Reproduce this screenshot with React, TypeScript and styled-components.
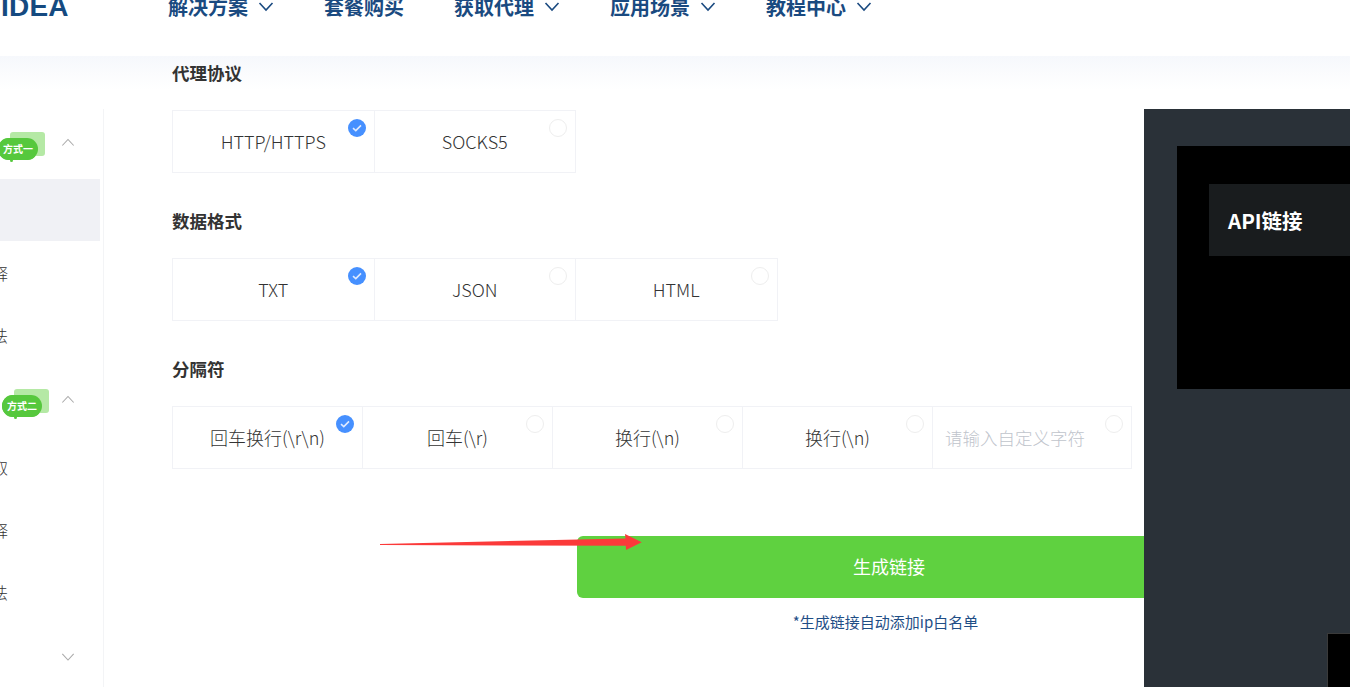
import React from "react";
import styled, { createGlobalStyle } from "styled-components";

const FONT = `"Noto Sans", "Noto Sans CJK SC", sans-serif`;

const Global = createGlobalStyle`
  html, body { margin: 0; padding: 0; height: 687px; overflow: hidden; background: #fff; }
  body { font-family: ${FONT}; color: #333; }
  * { box-sizing: border-box; }
`;

const Page = styled.div`
  position: relative;
  width: 1350px;
  height: 687px;
  overflow: hidden;
`;

const Header = styled.header`
  display: flow-root;
  height: 56px;
  background: #fff;
`;

const HeaderRow = styled.div`
  display: flex;
  align-items: center;
  height: 28px;
  margin-top: -7px;
`;

const Logo = styled.div`
  width: 168px;
  padding-left: 1px;
  font: 700 28px/28px "Liberation Sans", sans-serif;
  color: #154a80;
  letter-spacing: 0.2px;
`;

const Nav = styled.nav`
  display: flex;
  align-items: center;
  gap: 50px;
`;

const NavItem = styled.a`
  display: flex;
  align-items: center;
  gap: 10px;
  font-size: 20px;
  line-height: 28px;
  font-weight: 700;
  font-family: "Noto Sans CJK SC", sans-serif;
  color: #1a4a80;
`;

const Content = styled.div`
  display: flex;
  height: 631px;
  background: linear-gradient(#f6f8fc, #ffffff 34px) no-repeat;
`;

const Sidebar = styled.aside`
  flex: none;
  width: 104px;
  margin-top: 53px;
  padding-right: 3px;
  border-right: 1px solid #f3f4f6;
  overflow: hidden;
  background: #fff;
`;

const GroupHead = styled.div`
  display: grid;
  grid-template-columns: 61px 14px;
  align-items: center;
  height: 67px;
  margin-bottom: 3px;
`;

const Badge = styled.div<{ $offset: number }>`
  position: relative;
  width: 40px;
  height: 22px;
  margin-left: ${(p) => p.$offset}px;
  margin-top: 12px;
  border-radius: 11px;
  background: #56c83d;
  box-shadow: 0 0 0 1.5px #fff;
  color: #fff;
  font-size: 10px;
  font-weight: 700;
  line-height: 22px;
  text-align: center;
  font-family: "Noto Sans CJK SC", sans-serif;
  z-index: 0;

  &::before {
    content: "";
    position: absolute;
    left: 12px;
    top: -6px;
    width: 35px;
    height: 24px;
    border-radius: 3px;
    background: #b5e9a5;
    z-index: -2;
  }

  &::after {
    content: "";
    position: absolute;
    left: 12px;
    bottom: -2px;
    width: 3px;
    height: 3px;
    border-radius: 50%;
    background: #56c83d;
  }
`;

const BadgeFace = styled.span`
  position: relative;
  display: block;
  border-radius: 11px;
  background: #56c83d;
`;

const SideRow = styled.div<{ $active?: boolean }>`
  display: flex;
  align-items: center;
  justify-content: flex-end;
  height: 62.4px;
  width: 100px;
  padding-right: 92px;
  font-size: 16px;
  font-weight: 300;
  white-space: nowrap;
  font-family: "Noto Sans CJK SC", sans-serif;
  color: #333;
  background: ${(p) => (p.$active ? "#f0f1f5" : "transparent")};
`;

const Main = styled.main`
  flex: 1;
  min-width: 0;
  padding-left: 68px;
  padding-top: 3px;
`;

const Section = styled.section`
  margin-bottom: 34px;
`;

const Heading = styled.h3`
  margin: 0 0 24px;
  font-size: 17.5px;
  line-height: 27px;
  font-weight: 700;
  font-family: "Noto Sans CJK SC", sans-serif;
  color: #333;
`;

const Options = styled.div`
  display: flex;
`;

const Option = styled.div<{ $w: number }>`
  position: relative;
  display: flex;
  align-items: center;
  justify-content: center;
  flex: none;
  width: ${(p) => p.$w}px;
  height: 63px;
  margin-right: -1px;
  padding-bottom: 1px;
  border: 1px solid #f1f2f6;
  font-size: 18px;
  font-weight: 300;
  color: #333;
  font-family: "Noto Sans CJK SC", sans-serif;
`;

const Radio = styled.span<{ $on?: boolean }>`
  position: absolute;
  top: 8px;
  right: 8px;
  display: flex;
  align-items: center;
  justify-content: center;
  width: 18px;
  height: 18px;
  border-radius: 50%;
  background: ${(p) => (p.$on ? "#4690ff" : "#fff")};
  border: ${(p) => (p.$on ? "none" : "1px solid #eeeeee")};
`;

const CustomInput = styled.input`
  width: 100%;
  height: 100%;
  padding: 0 40px 0 12px;
  border: none;
  outline: none;
  background: transparent;
  font: 300 17.5px "Noto Sans CJK SC", sans-serif;
  &::placeholder { color: #c0c4cc; opacity: 1; }
`;

const Action = styled.div`
  width: 624px;
  margin: 67px 0 0 405px;
  text-align: center;
`;

const Generate = styled.button`
  display: block;
  width: 100%;
  height: 62px;
  padding: 0 0 2px;
  border: none;
  border-radius: 6px;
  background: #5fd140;
  color: #fff;
  font: 400 18px "Noto Sans CJK SC", sans-serif;
`;

const Hint = styled.p`
  margin: 14px 0 0;
  padding-right: 7px;
  font-size: 15px;
  line-height: 20px;
  color: #1f4e86;
  font-family: "Noto Sans CJK SC", sans-serif;
`;

const Panel = styled.aside`
  position: relative;
  z-index: 1;
  flex: none;
  width: 206px;
  margin-top: 53px;
  padding: 37px 0 0 33px;
  background: #2a3138;
  overflow: hidden;
`;

const CodeBlock = styled.div`
  width: 173px;
  height: 243px;
  padding: 38px 0 0 32px;
  background: #000;
`;

const Tab = styled.div`
  height: 72px;
  padding-left: 19px;
  background: #191c1e;
  color: #fff;
  font: 700 20.5px/72px "Noto Sans CJK SC", sans-serif;
`;

const CodeStub = styled.div`
  width: 40px;
  height: 60px;
  margin: 244px 0 0 150px;
  background: #000;
  border: 1px solid #3a3a3a;
`;

const Arrow = styled.svg`
  position: absolute;
  left: 378px;
  top: 532px;
  z-index: 2;
`;

const Chevron = ({ up, size = 16, color = "#1a4a80", w = 1.6 }: { up?: boolean; size?: number; color?: string; w?: number }) => (
  <svg width={size} height={size * 0.6} viewBox="0 0 16 9.6" fill="none" stroke={color} strokeWidth={w}>
    <path d={up ? "M1.5 8.6 8 1.6l6.5 7" : "M1.5 1 8 8l6.5-7"} />
  </svg>
);

const Check = () => (
  <svg width="10" height="8" viewBox="0 0 10 8" fill="none" stroke="#dfeaff" strokeWidth="1.6">
    <path d="M1 4.2 3.8 6.6 9 1.4" />
  </svg>
);

const navItems = [
  { label: "解决方案", menu: true },
  { label: "套餐购买", menu: false },
  { label: "获取代理", menu: true },
  { label: "应用场景", menu: true },
  { label: "教程中心", menu: true },
];

const Field = ({ title, items, w }: { title: string; items: string[]; w: number }) => (
  <Section>
    <Heading>{title}</Heading>
    <Options>
      {items.map((it, i) => (
        <Option key={it + i} $w={w}>
          {it}
          <Radio $on={i === 0}>{i === 0 && <Check />}</Radio>
        </Option>
      ))}
    </Options>
  </Section>
);

export default function App() {
  return (
    <Page>
      <Global />
      <Header>
        <HeaderRow>
          <Logo>IDEA</Logo>
          <Nav>
            {navItems.map((n) => (
              <NavItem key={n.label}>
                {n.label}
                {n.menu && <Chevron />}
              </NavItem>
            ))}
          </Nav>
        </HeaderRow>
      </Header>
      <Content>
        <Sidebar>
          <GroupHead>
            <Badge $offset={-2}>
              <BadgeFace>方式一</BadgeFace>
            </Badge>
            <Chevron up size={14} color="#aaa" w={1.2} />
          </GroupHead>
          <SideRow $active />
          <SideRow>参数注释</SideRow>
          <SideRow>使用方法</SideRow>
          <GroupHead>
            <Badge $offset={2}>
              <BadgeFace>方式二</BadgeFace>
            </Badge>
            <Chevron up size={14} color="#aaa" w={1.2} />
          </GroupHead>
          <SideRow>API提取</SideRow>
          <SideRow>参数注释</SideRow>
          <SideRow>使用方法</SideRow>
          <GroupHead>
            <span />
            <Chevron size={14} color="#aaa" w={1.2} />
          </GroupHead>
        </Sidebar>
        <Main>
          <Field title="代理协议" items={["HTTP/HTTPS", "SOCKS5"]} w={202.5} />
          <Field title="数据格式" items={["TXT", "JSON", "HTML"]} w={202.5} />
          <Section>
            <Heading>分隔符</Heading>
            <Options>
              {["回车换行(\\r\\n)", "回车(\\r)", "换行(\\n)", "换行(\\n)"].map((it, i) => (
                <Option key={i} $w={191}>
                  {it}
                  <Radio $on={i === 0}>{i === 0 && <Check />}</Radio>
                </Option>
              ))}
              <Option $w={200}>
                <CustomInput placeholder="请输入自定义字符" />
                <Radio />
              </Option>
            </Options>
          </Section>
          <Action>
            <Generate>生成链接</Generate>
            <Hint>*生成链接自动添加ip白名单</Hint>
          </Action>
        </Main>
        <Panel>
          <CodeBlock>
            <Tab>API链接</Tab>
          </CodeBlock>
          <CodeStub />
        </Panel>
      </Content>
      <Arrow width="266" height="22" viewBox="378 532 266 22">
        <path d="M380 544 L625.5 538.4 L625 534 L641.7 542.3 L626 550 L625.8 545.8 L380 545 Z" fill="#fb3a3a" />
      </Arrow>
    </Page>
  );
}
